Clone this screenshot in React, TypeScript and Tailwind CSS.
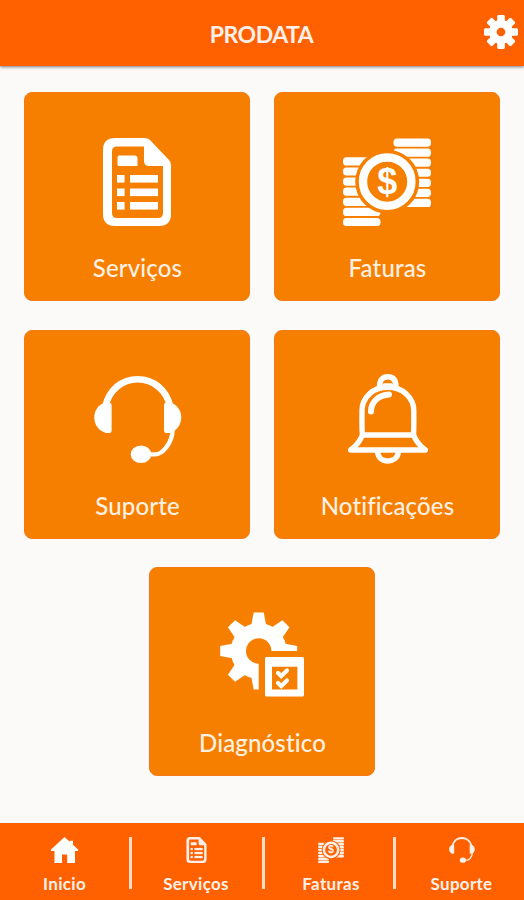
import React from 'react';

interface IconProps {
  className?: string;
}

const TEETH = [0, 45, 90, 135, 180, 225, 270, 315];
const COIN_ROWS = [0, 1, 2, 3, 4, 5, 6];

const SettingsIcon: React.FC<IconProps> = ({ className }) => (
  <svg viewBox="0 0 34 34" className={className} fill="none">
    <circle cx="17" cy="17" r="8.1" stroke="currentColor" strokeWidth="7.6" />
    {TEETH.map((angle) => (
      <rect
        key={angle}
        x="13.2"
        y="0"
        width="7.6"
        height="8"
        rx="1.4"
        fill="currentColor"
        transform={`rotate(${angle} 17 17)`}
      />
    ))}
  </svg>
);

const ServicesIcon: React.FC<IconProps> = ({ className }) => (
  <svg viewBox="0 0 68 88" className={className} fill="currentColor">
    <path
      fillRule="evenodd"
      d="M12 0H42Q45 0 47 2L66 22Q68 24 68 27V76Q68 88 56 88H12Q0 88 0 76V12Q0 0 12 0ZM14 8.5Q9 8.5 9 13.5V75Q9 80 14 80H55Q60 80 60 75V28H46Q41 28 41 23V8.5Z"
    />
    <path d="M16 17.5H31.5Q34.5 17.5 34.5 20.5V28H16Q14.5 28 14.5 26.5V19Q14.5 17.5 16 17.5Z" />
    {[37, 50.5, 64].map((y) => (
      <g key={y}>
        <rect x="14" y={y} width="7.6" height="7.6" />
        <rect x="27" y={y} width="28" height="7.6" />
      </g>
    ))}
  </svg>
);

const InvoicesIcon: React.FC<IconProps> = ({ className }) => (
  <svg viewBox="0 0 88 88" className={className} fill="currentColor">
    <defs>
      <mask id="coin-gap">
        <rect width="88" height="88" fill="white" />
        <circle cx="44.2" cy="43.7" r="32" fill="black" />
      </mask>
    </defs>
    <g mask="url(#coin-gap)">
      {COIN_ROWS.map((row) => (
        <g key={row}>
          <rect x="50.5" y={0.5 + row * 10.05} width="37.5" height="8.2" rx="3.6" />
          <rect x="0" y={19.3 + row * 10.1} width="37.5" height="8.2" rx="3.6" />
        </g>
      ))}
    </g>
    <circle cx="44.2" cy="43.7" r="24.2" fill="none" stroke="currentColor" strokeWidth="8.4" />
    <text
      x="44.2"
      y="55.5"
      textAnchor="middle"
      fontSize="36"
      fontWeight="700"
      fontFamily="'Liberation Sans', sans-serif"
    >
      $
    </text>
  </svg>
);

const SupportIcon: React.FC<IconProps> = ({ className }) => (
  <svg viewBox="0 0 88 88" className={className} fill="currentColor">
    <path
      d="M11.5 30C15 14 28 3.3 43.7 3.3S72.5 14 76 30"
      fill="none"
      stroke="currentColor"
      strokeWidth="6.6"
    />
    <path d="M11 26.5H15Q17.6 26.5 17.6 29V54.5Q17.6 57 15 57H12C5 55 0.3 49 0.3 41.5S4.5 29 11 26.5Z" />
    <path d="M76.5 26.5H72.5Q70 26.5 70 29V54.5Q70 57 72.5 57H75.5C82.5 55 87.2 49 87.2 41.5S83 29 76.5 26.5Z" />
    <path
      d="M78.5 54C78.5 66 69 78.4 61 78.4H50"
      fill="none"
      stroke="currentColor"
      strokeWidth="4.4"
    />
    <ellipse cx="47" cy="78.3" rx="10.3" ry="8.8" />
  </svg>
);

const BellIcon: React.FC<IconProps> = ({ className }) => (
  <svg
    viewBox="0 0 80 90"
    className={className}
    fill="none"
    stroke="currentColor"
    strokeWidth="5.4"
    strokeLinejoin="round"
    strokeLinecap="round"
  >
    <path d="M31.5 13C31.5 6 34.5 2.8 39.7 2.8S48 6 48 13" />
    <path d="M36 10.8H43.5" strokeWidth="3" />
    <path d="M14.5 61C13.6 54 14 46 14 37C14 23 25 13.3 39.7 13.3S65.8 23 65.8 37C65.8 46 66 54 65.5 61" />
    <path d="M14.5 61H65.5C68 67 72 72 77.3 76H2.7C8 72 12 67 14.5 61Z" />
    <path d="M29.5 77.5C30 84 34.5 87 39.7 87S50 84 50.5 77.5" />
    <path d="M23 37.5C23 28 30.5 21 41 20.5" strokeWidth="6" />
  </svg>
);

const DiagnosticIcon: React.FC<IconProps> = ({ className }) => (
  <svg viewBox="0 0 84 85" className={className} fill="currentColor">
    <defs>
      <mask id="gear-cut">
        <rect width="84" height="85" fill="white" />
        <circle cx="38.7" cy="39" r="12.7" fill="black" />
        <rect x="38.7" y="39" width="46" height="46" fill="black" />
      </mask>
    </defs>
    <g mask="url(#gear-cut)">
      <circle cx="38.7" cy="39" r="28" />
      {TEETH.map((angle) => (
        <path
          key={angle}
          d="M33.7 0.5H43.7L46.5 15H30.9Z"
          transform={`rotate(${angle} 38.7 39)`}
        />
      ))}
    </g>
    <path
      fillRule="evenodd"
      d="M46.5 45H82.5Q84 45 84 46.5V83Q84 84.5 82.5 84.5H46.5Q45 84.5 45 83V46.5Q45 45 46.5 45ZM52 54.7V77.5H77.4V54.7Z"
    />
    <path
      d="M58 61L61.2 64L67 58.5M58 71L61.2 74L67 68.5"
      fill="none"
      stroke="currentColor"
      strokeWidth="4.2"
      strokeLinecap="round"
    />
  </svg>
);

const HomeIcon: React.FC<IconProps> = ({ className }) => (
  <svg viewBox="0 0 27 26" className={className} fill="currentColor">
    <path d="M13.5 0L18.8 4.8V3.8H22V7.8L27 12.4V14H24V26H16.2V17.5H11V26H3.5V14H0V12.4Z" />
  </svg>
);

interface CardProps {
  label: string;
  icon: React.ReactNode;
}

const Card: React.FC<CardProps> = ({ label, icon }) => (
  <button className="flex h-[209px] w-[226px] flex-col items-center rounded-lg border border-[#f37a14] bg-[#f77f00] pt-[45px] text-white">
    <div className="flex h-[90px] items-start justify-center">{icon}</div>
    <span className="mt-6 pl-px text-[24px] leading-8 font-medium tracking-[0.15px] text-[#fff1e4]">
      {label}
    </span>
  </button>
);

interface NavItemProps extends CardProps {
  className: string;
}

const NavItem: React.FC<NavItemProps> = ({ label, icon, className }) => (
  <button className={`flex shrink-0 flex-col items-center pt-[14px] text-[#fff1e9] ${className}`}>
    <div className="flex h-[27px] items-start justify-center">{icon}</div>
    <span className="mt-[10px] text-[17px] leading-5 font-bold tracking-[0.3px]">{label}</span>
  </button>
);

const Divider = () => <div className="mt-[14px] h-[52px] w-[3px] shrink-0 bg-[#ffdcc8]" />;

export default function App() {
  return (
    <div className="flex h-[900px] w-[524px] flex-col overflow-hidden bg-[#fcfaf8] font-['Lato',sans-serif]">
      <header className="relative flex h-[66px] shrink-0 items-center justify-center bg-[#ff6000] pt-[3px] shadow-[0_1px_3px_rgba(60,60,80,0.7)]">
        <h1 className="pr-px text-[23px] font-bold tracking-[-0.5px] text-[#fff0ea]">PRODATA</h1>
        <button className="absolute top-[15px] right-[6px] text-white">
          <SettingsIcon className="size-[34px]" />
        </button>
      </header>

      <main className="flex flex-1 flex-col items-center pt-[26px]">
        <div className="grid grid-cols-2 gap-x-6 gap-y-[29px]">
          <Card label="Serviços" icon={<ServicesIcon className="h-[88px] w-[68px]" />} />
          <Card label="Faturas" icon={<InvoicesIcon className="size-[88px]" />} />
          <Card label="Suporte" icon={<SupportIcon className="ml-px size-[88px]" />} />
          <Card label="Notificações" icon={<BellIcon className="-mt-0.5 ml-px h-[90px] w-[80px]" />} />
        </div>
        <div className="mt-7">
          <Card
            label="Diagnóstico"
            icon={<DiagnosticIcon className="-mt-px h-[85px] w-[84px]" />}
          />
        </div>
      </main>

      <nav className="flex h-[77px] shrink-0 bg-[#ff6000]">
        <NavItem
          label="Inicio"
          icon={<HomeIcon className="h-[26px] w-[27px] text-white" />}
          className="w-[129px]"
        />
        <Divider />
        <NavItem
          label="Serviços"
          icon={<ServicesIcon className="h-[26px] w-[21px]" />}
          className="w-[130px] pr-[2px]"
        />
        <Divider />
        <NavItem
          label="Faturas"
          icon={<InvoicesIcon className="size-[26px]" />}
          className="w-[128px] pl-1"
        />
        <Divider />
        <NavItem
          label="Suporte"
          icon={<SupportIcon className="size-[26px]" />}
          className="w-[128px] pl-[3px]"
        />
      </nav>
    </div>
  );
}
